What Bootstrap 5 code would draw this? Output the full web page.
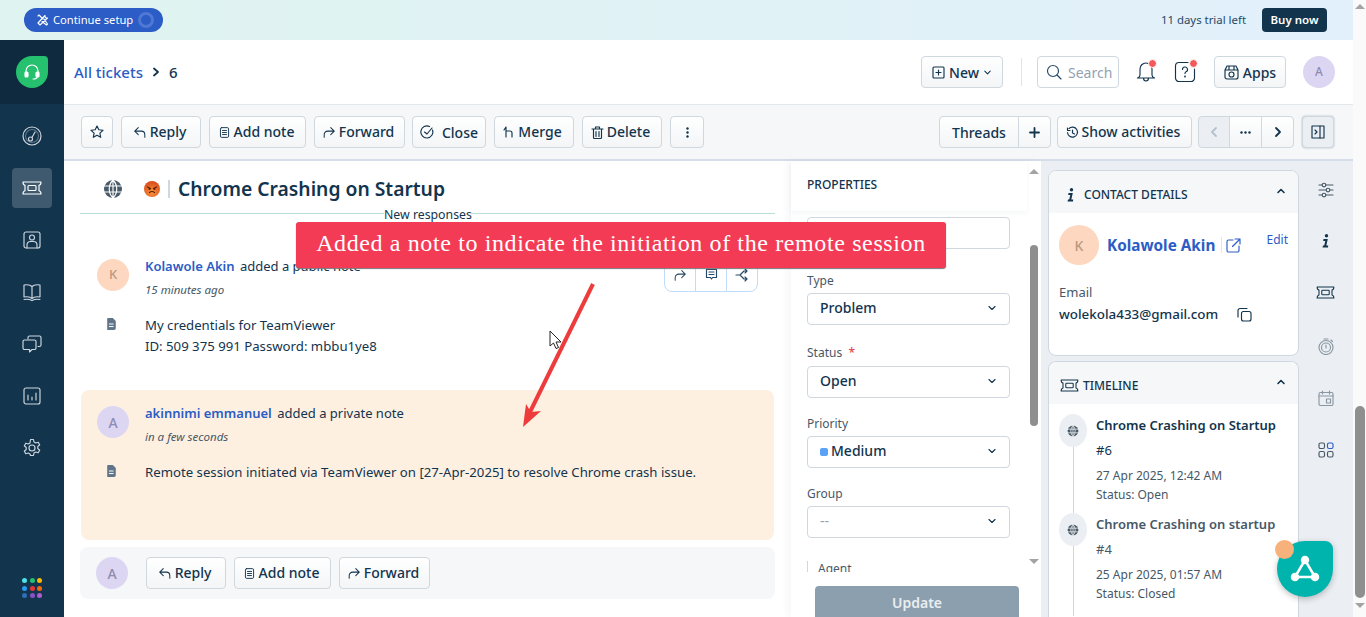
<!DOCTYPE html>
<html lang="en"><head><meta charset="utf-8"><title>Ticket 6</title>
<link href="https://cdn.jsdelivr.net/npm/bootstrap@5.3.0/dist/css/bootstrap.min.css" rel="stylesheet">
<style>
html,body{height:617px;overflow:hidden}
body{font-family:"Noto Sans","Open Sans",sans-serif;font-size:13px;color:#12344d;display:flex;position:relative;background:#fff}
svg.ic{fill:none;stroke:currentColor;stroke-width:1.15;stroke-linecap:round;stroke-linejoin:round;flex:none}
.appcol{width:1353px;height:617px;display:flex;flex-direction:column}
.pagesb{width:13px;height:617px;background:#fafafa;display:flex;flex-direction:column;align-items:center}
.sbup{width:0;height:0;border-left:5px solid transparent;border-right:5px solid transparent;border-bottom:5px solid #a3a3a3}
.sbdn{width:0;height:0;border-left:5px solid transparent;border-right:5px solid transparent;border-top:5px solid #a3a3a3}
.topstrip{height:40px;background:linear-gradient(90deg,#dff4f0,#e2f0fb);padding:0 26px 0 24px;flex:none}
.setup-pill{height:24px;width:139px;border-radius:12px;background:#2c5cc5;color:#fff;font-size:11.2px;padding-left:13px;gap:4px}
.setup-ring{width:16px;height:16px;border-radius:50%;border:3px solid #4f78d4;margin-left:1px}
.trial{font-size:11.4px;color:#264966;margin-right:16px}
.buynow{height:24px;width:65px;background:#12344d;color:#fff;border-radius:4px;font-size:11.5px;font-weight:600}
.mainrow{flex:1;min-height:0}
.siderail{width:64px;background:#12344d;flex:none;color:#cfd7df}
.logoblock{height:64px;background:#0f2a3e}
.logodrop{width:32px;height:32px;background:#25c16f;border-radius:50% 4px 50% 50%;color:#fff}
.railitems{padding-top:12px;gap:12px}
.railitem{width:40px;height:40px;border-radius:4px}
.railitem.on{background:#3f5a6f}
.dotgrid{display:grid;grid-template-columns:repeat(3,5px);gap:2.5px;padding-bottom:19px}
.dotgrid i{width:5px;height:5px;border-radius:50%;display:block}
.contentcol{flex:1;min-width:0}
.headbar{height:65px;border-bottom:1px solid #e3e8ed;padding:0 18px 0 10px;flex:none}
.crumb{font-size:15px;font-weight:500;color:#2c5cc5}
.crumbnum{font-size:15px;font-weight:500}
.tbtn{height:32px;background:linear-gradient(#fff,#f3f5f7);border:1px solid #cfd7df;border-radius:4px;color:#12344d;font-size:14px;font-weight:500;padding:0;display:inline-flex;align-items:center;justify-content:center;gap:4px;flex:none;white-space:nowrap}
.tbtn.txbtn{padding:0 3px 2px 0;gap:3px}
.tbtn.txbtn svg{margin-top:2px}
.vsep{width:1px;height:28px;background:#dfe5ea;margin:0 15px 0 18px}
.searchbox{width:82px;height:32px;border:1px solid #cfd7df;border-radius:4px;color:#92a2b1;font-size:14px;padding-left:8px;gap:6px;background:#fff}
.dotwrap{position:relative;display:flex;color:#12344d;margin-left:17px}
.reddot{position:absolute;top:-2px;right:-1px;width:7px;height:7px;background:#f25a5a;border-radius:50%;border:1px solid #fff;box-sizing:content-box}
.avcirc{border-radius:50%;width:32px;height:32px;flex:none;font-size:13px;font-weight:500}
.av-a{background:#dcd6f2;color:#8e8bb0}
.av-k{background:#fdd7bf;color:#b9997f}
.toolbar{height:56px;background:#f5f7f9;border-bottom:2px solid #d5dee8;padding:0 19px 0 17px;flex:none;gap:8px}
.w32{width:32px}
.btngrp{display:flex}
.btngrp .tbtn{border-radius:0;margin-left:-1px}
.btngrp .tbtn:first-child{border-radius:4px 0 0 4px;margin-left:0}
.btngrp .tbtn:last-child{border-radius:0 4px 4px 0}
.workrow{flex:1;min-height:0}
.ticketcol{width:727px;flex:none;padding:0 16px;position:relative;overflow:hidden}
.subjrow{height:52px;padding:4px 0 0 23px}
.subject{font-size:19.3px;font-weight:600;margin:0;line-height:1}
.emoji{margin-left:21px;flex:none}
.subjsep{width:2px;height:18px;background:#cfd7df;margin:0 8px}
.newresp{position:relative;height:1px;background:#b9e0d8}
.newresp span{position:absolute;left:304px;top:-5px;font-size:12.3px;line-height:14px;background:#fff;width:87px;text-align:center;white-space:nowrap}
.note{display:grid;grid-template-columns:48px 1fr;padding:0 16px;align-content:start}
.note1{height:176px;padding:45px 16px 0 17px;position:relative}
.note2{height:150px;background:#fef0e1;border-radius:8px;padding-top:16px;margin:0 1px}
.notename{font-weight:600;color:#2c5cc5;margin-right:2px}
.notehead{line-height:20px;margin-top:-3px}
.notetime{font-size:11.5px;font-style:italic;color:#475867;line-height:16px;margin-top:6px}
.notedoc{color:#5f7488;margin-left:9px;margin-top:3px;display:block}
.notebody{line-height:21px;margin-top:17px;font-size:13.2px}
.docwrap{margin-top:17px}
.hovertools{position:absolute;left:584px;top:39px;width:94px;height:39px;background:#fff;border:1px solid #bfdcf9;border-radius:0 0 8px 8px}
.hovertools span{flex:1;display:flex;align-items:center;justify-content:center;border-left:1px solid #bfdcf9;padding-top:4px;color:#264966}
.hovertools span:first-child{border-left:0}
.replybar{height:52px;background:#f5f7f9;border-radius:8px;margin-top:7px;padding:0 16px;gap:8px}
.replybar .avcirc{margin-right:10px}
.propcol{width:250px;flex:none;box-shadow:-4px 0 6px rgba(18,52,77,.04);display:flex;flex-direction:column;position:relative}
.prophead{height:50px;padding:15px 0 0 16px;font-size:12px;font-weight:500;box-shadow:0 2px 4px rgba(18,52,77,.05);position:relative;z-index:1;width:236px;flex:none}
.propbody{flex:1;min-height:0;overflow:hidden;padding:6px 30px 0 16px}
.propscroll{position:absolute;right:1px;top:0;width:12px;height:411px;display:flex;flex-direction:column;align-items:center;padding-top:6px}
.propthumb{width:8px;height:181px;background:#8f8f8f;border-radius:4px;margin-top:71px}
.fieldbox{height:32px;width:203px;border:1px solid #cfd7df;border-radius:4px;background:#fff;font-size:14px;font-weight:500;padding:0 12px 2px;justify-content:space-between;line-height:20px}
.fieldlbl{font-size:12px;color:#475867;line-height:16px;margin-top:24px;margin-bottom:4px}
.lbl-status{margin-top:20px;margin-bottom:5px}
.lbl-next{margin-top:18px}
.lbl-agent{border-left:1px solid #cfd7df;padding-left:10px;margin-top:23px}
.star{color:#e43538}
.prio{width:8px;height:8px;background:#5aa2f7;border-radius:2px;margin-right:3px;display:inline-block}
.updatewrap{height:31px;flex:none;padding-left:24px;margin-top:14px}
.updatebtn{width:204px;height:44px;background:#8c9fae;border-radius:4px 4px 0 0;color:#e9eef2;font-weight:600;font-size:14px;text-align:center;line-height:33px}
.detailcol{flex:1;background:#ebeff3;display:flex;padding:9px 0 0 7px;min-width:0;overflow:hidden}
.panelcards{width:251px;flex:none}
.pcard{background:#fff;border:1px solid #cfd7df;border-radius:8px;overflow:hidden}
.pcardhead{height:42px;background:#f5f7f9;padding:5px 12px 0 17px;font-size:12px;font-weight:500;gap:8px}
.pcardhead .chev{margin-top:-7px}
.contactcard{height:186px;margin-bottom:5px;position:relative}
.bigav{width:40px;height:40px;font-size:14px}
.cname{font-size:15.3px;font-weight:700;color:#2c5cc5;padding-top:1px}
.namesep{width:1px;height:16px;background:#dfe5ea;margin:0 -4px 0 -2px}
.editlink{font-size:12px;color:#2c5cc5;position:absolute;right:10px;top:60px}
.emlbl{font-size:13px;color:#475867;line-height:18px;margin:18px 0 3px}
.emval{font-weight:500;font-size:13.4px}
.tlcard{height:300px;border-bottom:0;border-radius:8px 8px 0 0}
.tlcardhead{padding-left:11px;gap:4px}
.tlitem{position:relative;padding-left:47px;height:99px;padding-top:11px}
.tlitem::before{content:"";position:absolute;left:24px;top:14px;bottom:-14px;width:1px;background:#cfd7df}
.tlicon{position:absolute;left:10px;top:10px;width:28px;height:33px;background:#ebeff3;border-radius:50%;color:#475867}
.tltitle{font-weight:600;line-height:20px}
.tlnum{line-height:20px;margin-top:5px}
.tlsub{font-size:12px;color:#475867;line-height:19px;margin-top:6px}
.tlsub+.tlsub{margin-top:0}
.closed .tltitle,.closed .tlnum{color:#475867}
.siderail2{width:53px;flex:none;padding-top:8px;color:#475867}
.siderail2 div{height:52px;width:100%;display:flex;justify-content:center;padding-top:4px}
.annot{position:absolute;left:296px;top:222px;width:650px;height:46px;background:#f33b55;border-radius:3px;box-shadow:0 1px 1px #777;color:#fff;font-family:"Liberation Serif",serif;font-size:24px;letter-spacing:.62px;padding-bottom:5px;z-index:5}
.arrowlay{position:absolute;left:500px;top:270px;z-index:6}
.pointer{position:absolute;left:549px;top:330px;z-index:7}
.fab{position:absolute;left:1277px;top:541px;width:56px;height:56px;background:#00b4ae;border-radius:50% 8px 50% 50%;box-shadow:0 2px 6px rgba(0,0,0,.25);z-index:8}
.fabdot{position:absolute;left:1275px;top:540px;width:19px;height:19px;background:#f7b27c;border-radius:50%;z-index:9}
</style></head>
<body>
<svg width="0" height="0" style="position:absolute">
<symbol id="i-ticket" viewBox="0 0 20 14"><path d="M1 1h18c0 1-.5 3-2 3.300v5.400c1.500.3 2 2.300 2 3.300H1c0-1 .5-3 2-3.300V4.300C1.500 4 1 2 1 1z"/><rect x="6" y="4.500" width="8" height="5" rx="1"/></symbol>
<symbol id="i-reply" viewBox="0 0 16 16"><path d="M6 3L2 7l4 4M2 7h7.500A4 4 0 0 1 13.500 11v3"/></symbol>
<symbol id="i-fwd" viewBox="0 0 16 16"><path d="M10 3l4 4-4 4M14 7H6.500A4 4 0 0 0 2.500 11v3"/></symbol>
<symbol id="i-note" viewBox="0 0 16 16"><rect x="3" y="2" width="10" height="12" rx="1.500"/><path d="M5.500 5.500h5M5.500 8h5M5.500 10.500h5"/></symbol>
<symbol id="i-down" viewBox="0 0 10 10"><path d="M2 3.500L5 6.500l3-3"/></symbol>
<symbol id="i-globe" viewBox="0 0 20 20"><circle cx="10" cy="10" r="9" fill="currentColor" stroke="none"/><path stroke="#fff" d="M1 7h18M1 13h18M10 1v18M10 1c-5 5-5 13 0 18M10 1c5 5 5 13 0 18"/></symbol>
<symbol id="i-doc" viewBox="0 0 12 14"><path fill="currentColor" stroke="none" d="M2 0h5.500L11 3.500V12a2 2 0 0 1-2 2H2a1 1 0 0 1-1-1V1a1 1 0 0 1 1-1z"/><path stroke="#fff" d="M3.500 7h4.500M3.500 10h4.500"/></symbol>
<symbol id="i-info" viewBox="0 0 10 14"><circle cx="5.500" cy="1.800" r="1.700" fill="currentColor" stroke="none"/><path fill="currentColor" stroke="none" d="M2.500 5h4.300L5.300 11.500H7.200L7 13.500H1.500L2 11.500h1.200L4.300 7H2.200z"/></symbol>
</svg>

<div class="appcol">
 <div class="topstrip d-flex align-items-center">
  <div class="setup-pill d-flex align-items-center">
   <svg class="ic" width="12" height="12" viewBox="0 0 12 12"><path d="M2 1l4 4M1 2l1-1M7 5l3.500 5-1 1L5 7.500M8 1.500a2 2 0 0 0 2.500 2.500L3 11 1 9z"/></svg>
   <span>Continue setup</span><span class="setup-ring"></span>
  </div>
  <span class="trial ms-auto">11 days trial left</span>
  <span class="buynow d-flex align-items-center justify-content-center">Buy now</span>
 </div>
 <div class="mainrow d-flex">
  <nav class="siderail d-flex flex-column">
   <div class="logoblock d-flex align-items-center justify-content-center">
    <div class="logodrop d-flex align-items-center justify-content-center">
     <svg class="ic" width="20" height="20" viewBox="0 0 20 20"><path d="M4 12V9a6 6 0 0 1 12 0v3M15 15c0 1.500-1.500 2-4 2"/><rect x="3" y="10" width="3" height="5" rx="1" fill="#fff"/><rect x="14" y="10" width="3" height="5" rx="1" fill="#fff"/></svg>
    </div>
   </div>
   <div class="railitems d-flex flex-column align-items-center flex-grow-1">
    <div class="railitem d-flex align-items-center justify-content-center"><svg class="ic" width="20" height="20" viewBox="0 0 20 20"><circle cx="10" cy="10" r="9"/><circle cx="10" cy="10" r="6.500" stroke-opacity=".4"/><circle cx="8.500" cy="13" r="2"/><path d="M10 11.500L13 6"/></svg></div>
    <div class="railitem on d-flex align-items-center justify-content-center"><svg class="ic" width="20" height="14" style="color:#fff"><use href="#i-ticket"/></svg></div>
    <div class="railitem d-flex align-items-center justify-content-center"><svg class="ic" width="18" height="18" viewBox="0 0 18 18"><rect x="1" y="1" width="16" height="16" rx="2"/><circle cx="9" cy="6.500" r="2.500"/><path d="M4 17v-3a3.500 3.500 0 0 1 3.500-3.500h3A3.500 3.500 0 0 1 14 14v3"/></svg></div>
    <div class="railitem d-flex align-items-center justify-content-center"><svg class="ic" width="18" height="18" viewBox="0 0 18 18"><path d="M9 3.500C7.500 2 4 1.500 1 2v12c3-.5 6.500 0 8 1.500 1.500-1.500 5-2 8-1.500V2c-3-.5-6.500 0-8 1.500zM9 3.500v12M1 16.500c3-.5 6 0 8 1 2-1 5-1.500 8-1"/></svg></div>
    <div class="railitem d-flex align-items-center justify-content-center"><svg class="ic" width="20" height="18" viewBox="0 0 20 18"><path d="M6 4V2.500A1.500 1.500 0 0 1 7.500 1h10A1.500 1.500 0 0 1 19 2.500V10a1.500 1.500 0 0 1-1.500 1.500H16"/><path d="M2.500 5h10A1.500 1.500 0 0 1 14 6.500V13a1.500 1.500 0 0 1-1.500 1.500H10L7.500 17v-2.500h-5A1.500 1.500 0 0 1 1 13V6.500A1.500 1.500 0 0 1 2.500 5z"/></svg></div>
    <div class="railitem d-flex align-items-center justify-content-center"><svg class="ic" width="18" height="18" viewBox="0 0 18 18"><rect x="1" y="1" width="16" height="16" rx="2"/><path d="M5 8v5M9 10v3M13 6v7"/></svg></div>
    <div class="railitem d-flex align-items-center justify-content-center"><svg class="ic" width="20" height="20" viewBox="0 0 20 20"><circle cx="10" cy="10" r="3"/><path d="M8.500 1.500h3l.5 2.500 1.800 1 2.400-.8 1.500 2.600-1.900 1.700v2l1.900 1.700-1.500 2.600-2.400-.8-1.800 1-.5 2.500h-3L8 16l-1.800-1-2.400.8-1.500-2.600L4.200 11.500v-2L2.300 7.800l1.500-2.600 2.400.8L8 5z"/></svg></div>
    <div class="dotgrid mt-auto">
     <i style="background:#4de1e8"></i><i style="background:#25c16f"></i><i style="background:#ffb700"></i>
     <i style="background:#2c9af0"></i><i style="background:#e43538"></i><i style="background:#f2690d"></i>
     <i style="background:#2c6fb8"></i><i style="background:#8d4fc4"></i><i style="background:#b25bd1"></i>
    </div>
   </div>
  </nav>
  <div class="contentcol d-flex flex-column">
   <header class="headbar d-flex align-items-center">
    <span class="crumb">All tickets</span>
    <svg class="ic mx-2" width="10" height="10" viewBox="0 0 10 10"><path stroke-width="1.800" d="M3 1.500L7 5l-4 3.500"/></svg>
    <span class="crumbnum">6</span>
    <button class="tbtn ms-auto" style="width:82px"><svg class="ic" width="13" height="13" viewBox="0 0 13 13"><rect x="1" y="1" width="11" height="11" rx="1"/><path d="M6.500 4v5M4 6.500h5"/></svg> New <svg class="ic" width="9" height="9"><use href="#i-down"/></svg></button>
    <span class="vsep"></span>
    <div class="searchbox d-flex align-items-center"><svg class="ic" width="16" height="16" viewBox="0 0 16 16" style="color:#264966"><circle cx="7" cy="7" r="5.500"/><path d="M11 11l4 4"/></svg>Search</div>
    <span class="dotwrap"><svg class="ic" width="20" height="22" viewBox="0 0 20 22"><path d="M10 2a6 6 0 0 0-6 6v6c0 1.500-1 2.500-2.500 3h17C17 16.500 16 15.500 16 14V8a6 6 0 0 0-6-6zM7.500 17c0 4 5 4 5 0"/></svg><i class="reddot"></i></span>
    <span class="dotwrap"><svg class="ic" width="24" height="24" viewBox="0 0 24 24"><path d="M15 2.500H6A3.500 3.500 0 0 0 2.500 6v12A3.500 3.500 0 0 0 6 21.500h12a3.500 3.500 0 0 0 3.500-3.500V9"/><path d="M9.500 9.500a2.500 2.500 0 1 1 3.500 2.300c-.7.400-1 1-1 1.700"/><circle cx="12" cy="16.500" r=".4"/></svg><i class="reddot" style="right:-1px;top:-1px"></i></span>
    <button class="tbtn" style="width:72px;margin-left:17px"><svg class="ic" width="15" height="15" viewBox="0 0 15 15"><path d="M3 1h9l2 4v7a2 2 0 0 1-2 2H3a2 2 0 0 1-2-2V5zM1 5h13M5 1v4M10 1v4"/><circle cx="7.500" cy="9.500" r="2.500"/></svg>Apps</button>
    <span class="avcirc av-a d-flex align-items-center justify-content-center" style="margin-left:17px;font-size:12px">A</span>
   </header>
   <div class="toolbar d-flex align-items-center">
    <button class="tbtn w32"><svg class="ic" width="14" height="14" viewBox="0 0 14 14"><path d="M7 1l1.800 3.800 4.200.5-3.100 2.900.8 4.100L7 10.300l-3.700 2 .8-4.100L1 5.300l4.200-.5z"/></svg></button>
    <button class="tbtn txbtn" style="width:80px"><svg class="ic" width="14" height="14"><use href="#i-reply"/></svg>Reply</button>
    <button class="tbtn txbtn" style="width:97px"><svg class="ic" width="13" height="13"><use href="#i-note"/></svg>Add note</button>
    <button class="tbtn txbtn" style="width:91px"><svg class="ic" width="14" height="14"><use href="#i-fwd"/></svg>Forward</button>
    <button class="tbtn" style="width:74px;margin-left:-1px"><svg class="ic me-1" width="14" height="14" viewBox="0 0 14 14"><path d="M12.500 5A6 6 0 1 1 9.500 1.600M4.500 7L7 9l5-6"/></svg>Close</button>
    <button class="tbtn txbtn" style="width:80px"><svg class="ic" width="12" height="12" viewBox="0 0 12 12"><path d="M3 11V1M1 4l2-3M3 5h4a2 2 0 0 1 2 2v4"/></svg>Merge</button>
    <button class="tbtn txbtn" style="width:80px"><svg class="ic" width="13" height="13" viewBox="0 0 13 13"><path d="M1 3h11M4.500 3V1h4v2M2.500 3v8.500a1 1 0 0 0 1 1h6a1 1 0 0 0 1-1V3M5 5.500v5M8 5.500v5"/></svg>Delete</button>
    <button class="tbtn" style="width:34px"><svg width="3" height="11" viewBox="0 0 3 11" fill="currentColor"><circle cx="1.500" cy="1.500" r="1.200"/><circle cx="1.500" cy="5.500" r="1.200"/><circle cx="1.500" cy="9.500" r="1.200"/></svg></button>
    <div class="btngrp ms-auto"><button class="tbtn" style="width:80px">Threads</button><button class="tbtn" style="width:33px"><svg class="ic" width="11" height="11" viewBox="0 0 11 11"><path stroke-width="1.800" d="M5.500 1v9M1 5.500h9"/></svg></button></div>
    <button class="tbtn txbtn" style="width:135px;margin-left:-2px"><svg class="ic" width="13" height="13" viewBox="0 0 13 13"><path d="M3 2.500A5 5 0 1 1 1.500 6.500M1.500 2v2.500h2.500M6.500 4v3l2 1"/></svg>Show activities</button>
    <div class="btngrp" style="margin-left:-2px"><button class="tbtn" style="width:32px;background:#ebeff3;color:#b4c0cb"><svg class="ic" width="10" height="12" viewBox="0 0 10 12"><path stroke-width="1.800" d="M7 2L3 6l4 4"/></svg></button><button class="tbtn" style="width:33px"><svg width="11" height="3" fill="currentColor"><circle cx="1.500" cy="1.500" r="1.200"/><circle cx="5.500" cy="1.500" r="1.200"/><circle cx="9.500" cy="1.500" r="1.200"/></svg></button><button class="tbtn" style="width:33px"><svg class="ic" width="10" height="12" viewBox="0 0 10 12"><path stroke-width="1.800" d="M3 2l4 4-4 4"/></svg></button></div>
    <button class="tbtn w32" style="background:#ebeff3;box-shadow:0 0 2px rgba(18,52,77,.35)"><svg class="ic" width="14" height="14" viewBox="0 0 14 14"><rect x="1" y="1" width="12" height="12"/><path d="M9 1v12M4 5l2 2-2 2"/></svg></button>
   </div>
   <div class="workrow d-flex">
    <main class="ticketcol">
     <div class="subjrow d-flex align-items-center">
      <svg class="ic" width="20" height="20" style="color:#475867"><use href="#i-globe"/></svg>
      <svg class="emoji" width="16" height="16" viewBox="0 0 16 16"><defs><radialGradient id="emo" cx=".5" cy=".7" r=".7"><stop offset="0" stop-color="#f7963a"/><stop offset="1" stop-color="#d8481a"/></radialGradient></defs><circle cx="8" cy="8" r="8" fill="url(#emo)"/><path d="M3.500 6l3 1.500M12.500 6l-3 1.500M5.500 11.500c1.500-1.200 3.500-1.200 5 0" stroke="#5a1c05" stroke-width="1.200" fill="none" stroke-linecap="round"/><circle cx="5.500" cy="8" r="1" fill="#5a1c05"/><circle cx="10.500" cy="8" r="1" fill="#5a1c05"/></svg>
      <span class="subjsep"></span>
      <h1 class="subject">Chrome Crashing on Startup</h1>
     </div>
     <div class="newresp"><span>New responses</span></div>
     <article class="note note1">
      <span class="avcirc av-k d-flex align-items-center justify-content-center">K</span>
      <div><div class="notehead"><span class="notename">Kolawole Akin</span> added a public note</div><div class="notetime">15 minutes ago</div></div>
      <div class="docwrap"><svg class="notedoc ic" width="11" height="12"><use href="#i-doc"/></svg></div>
      <div class="notebody">My credentials for TeamViewer<br>ID: 509 375 991 Password: mbbu1ye8</div>
      <div class="hovertools d-flex">
       <span><svg class="ic" width="14" height="14"><use href="#i-fwd"/></svg></span>
       <span><svg class="ic" width="13" height="13" viewBox="0 0 13 13"><path d="M1.500 1.500h10v8H7.500L6.500 11l-1-1.500h-4zM4 4h5M4 6.500h5"/></svg></span>
       <span><svg class="ic" width="14" height="14" viewBox="0 0 14 14"><path d="M1 7h4M5 7l4-4h3M5 7l4 4h3M10 1l2 2-2 2M10 9l2 2-2 2"/></svg></span>
      </div>
     </article>
     <article class="note note2">
      <span class="avcirc av-a d-flex align-items-center justify-content-center" style="font-size:14px">A</span>
      <div><div class="notehead"><span class="notename">akinnimi emmanuel</span> added a private note</div><div class="notetime">in a few seconds</div></div>
      <div class="docwrap"><svg class="notedoc ic" width="11" height="12"><use href="#i-doc"/></svg></div>
      <div class="notebody">Remote session initiated via TeamViewer on [27-Apr-2025] to resolve Chrome crash issue.</div>
     </article>
     <div class="replybar d-flex align-items-center">
      <span class="avcirc av-a d-flex align-items-center justify-content-center" style="font-size:14px">A</span>
      <button class="tbtn txbtn" style="width:80px"><svg class="ic" width="14" height="14"><use href="#i-reply"/></svg>Reply</button>
      <button class="tbtn txbtn" style="width:97px"><svg class="ic" width="13" height="13"><use href="#i-note"/></svg>Add note</button>
      <button class="tbtn txbtn" style="width:91px"><svg class="ic" width="14" height="14"><use href="#i-fwd"/></svg>Forward</button>
     </div>
    </main>
    <aside class="propcol">
     <div class="prophead">PROPERTIES</div>
     <div class="propbody">
      <div class="fieldbox d-flex align-items-center"></div>
      <div class="fieldlbl">Type</div>
      <div class="fieldbox d-flex align-items-center">Problem<svg class="ic" width="10" height="10"><use href="#i-down"/></svg></div>
      <div class="fieldlbl lbl-status">Status &nbsp;<span class="star">*</span></div>
      <div class="fieldbox d-flex align-items-center">Open<svg class="ic" width="10" height="10"><use href="#i-down"/></svg></div>
      <div class="fieldlbl lbl-next">Priority</div>
      <div class="fieldbox d-flex align-items-center"><span><i class="prio"></i>Medium</span><svg class="ic" width="10" height="10"><use href="#i-down"/></svg></div>
      <div class="fieldlbl lbl-next">Group</div>
      <div class="fieldbox d-flex align-items-center" style="color:#92a2b1;font-weight:400">--<svg class="ic" width="10" height="10" style="color:#12344d"><use href="#i-down"/></svg></div>
      <div class="fieldlbl lbl-agent">Agent</div>
     </div>
     <div class="updatewrap"><div class="updatebtn">Update</div></div>
     <div class="propscroll"><span class="sbup" style="margin-top:2px"></span><span class="propthumb"></span><span class="sbdn" style="margin-top:133px"></span></div>
    </aside>
    <section class="detailcol">
     <div class="panelcards">
      <div class="pcard contactcard">
       <div class="pcardhead d-flex align-items-center"><svg width="10" height="14" style="color:#12344d" fill="currentColor"><use href="#i-info"/></svg><span>CONTACT DETAILS</span><svg class="ic ms-auto chev" width="10" height="10" viewBox="0 0 10 10"><path stroke-width="1.600" d="M2 6.500L5 3.500l3 3"/></svg></div>
       <div style="padding:12px 10px">
        <div class="d-flex align-items-center gap-2"><span class="avcirc av-k bigav d-flex align-items-center justify-content-center">K</span><span class="cname">Kolawole Akin</span><span class="namesep"></span><svg class="ic" width="15" height="15" viewBox="0 0 15 15" style="color:#2c5cc5"><path d="M7 2H2.500A1.500 1.500 0 0 0 1 3.500v9A1.500 1.500 0 0 0 2.500 14h9a1.500 1.500 0 0 0 1.500-1.500V8M9 1h5v5M14 1L6.500 8.500"/></svg></div>
        <div class="emlbl">Email</div>
        <div class="d-flex align-items-center"><span class="emval">wolekola433@gmail.com</span><svg class="ic" width="15" height="15" viewBox="0 0 15 15" style="margin-left:19px"><rect x="4.500" y="4.500" width="9.500" height="9.500" rx="2"/><path d="M10 1.500H3A2 2 0 0 0 1 3.500V10"/></svg></div>
       </div>
       <span class="editlink">Edit</span>
      </div>
      <div class="pcard tlcard">
       <div class="pcardhead tlcardhead d-flex align-items-center"><svg class="ic" width="19" height="13"><use href="#i-ticket"/></svg><span>TIMELINE</span><svg class="ic ms-auto chev" width="10" height="10" viewBox="0 0 10 10"><path stroke-width="1.600" d="M2 6.500L5 3.500l3 3"/></svg></div>
       <div class="tlitem"><span class="tlicon d-flex align-items-center justify-content-center"><svg class="ic" width="12" height="12"><use href="#i-globe"/></svg></span><div class="tltitle">Chrome Crashing on Startup</div><div class="tlnum">#6</div><div class="tlsub">27 Apr 2025, 12:42 AM</div><div class="tlsub">Status: Open</div></div>
       <div class="tlitem closed"><span class="tlicon d-flex align-items-center justify-content-center"><svg class="ic" width="12" height="12"><use href="#i-globe"/></svg></span><div class="tltitle">Chrome Crashing on startup</div><div class="tlnum">#4</div><div class="tlsub">25 Apr 2025, 01:57 AM</div><div class="tlsub">Status: Closed</div></div>
      </div>
     </div>
     <div class="siderail2 d-flex flex-column align-items-center">
      <div><svg class="ic" width="16" height="16" viewBox="0 0 16 16"><path d="M1 3h14M1 8h14M1 13h14"/><circle cx="6" cy="3" r="1.800" fill="#ebeff3"/><circle cx="10" cy="8" r="1.800" fill="#ebeff3"/><circle cx="6" cy="13" r="1.800" fill="#ebeff3"/></svg></div>
      <div style="color:#12344d"><svg width="10" height="14" fill="currentColor"><use href="#i-info"/></svg></div>
      <div style="color:#12344d"><svg class="ic" width="19" height="13"><use href="#i-ticket"/></svg></div>
      <div style="color:#8a97a3"><svg class="ic" width="16" height="17" viewBox="0 0 16 17"><circle cx="8" cy="9.500" r="7"/><circle cx="8" cy="9.500" r="4.500"/><path d="M8 7v3M6 1h4M13 2l1.500 1.500"/></svg></div>
      <div style="color:#8a97a3"><svg class="ic" width="16" height="16" viewBox="0 0 16 16"><rect x="1" y="2.500" width="14" height="13" rx="1.500"/><path d="M1 6h14M4.500 1v3M11.500 1v3"/><rect x="8.500" y="9" width="4" height="4"/></svg></div>
      <div><svg class="ic" width="16" height="16" viewBox="0 0 16 16"><rect x="1" y="1" width="5.500" height="5.500" rx="1.500"/><rect x="9.500" y="1" width="5.500" height="5.500" rx="1.500" stroke="#2c5cc5"/><rect x="1" y="9.500" width="5.500" height="5.500" rx="1.500"/><rect x="9.500" y="9.500" width="5.500" height="5.500" rx="1.500"/></svg></div>
     </div>
    </section>
   </div>
  </div>
 </div>
</div>
<div class="pagesb"><span class="sbup" style="margin-top:4px"></span><span style="width:10px;height:192px;background:#8f8f8f;border-radius:5px;margin-top:397px"></span><span class="sbdn" style="margin-top:5px"></span></div>

<div class="annot d-flex align-items-center justify-content-center">Added a note to indicate the initiation of the remote session</div>
<svg class="arrowlay" width="110" height="165" viewBox="500 270 110 165"><path d="M593 284L530 412" stroke="#ee3b3b" stroke-width="4" fill="none"/><path d="M523 427l3-23 5 8 10-1z" fill="#ee3b3b"/></svg>
<svg class="pointer" width="14" height="20" viewBox="0 0 14 20"><path d="M1 1v15l3.500-3 2.500 5.500 2.500-1-2.500-5.500H12z" fill="#fff" stroke="#222" stroke-width="1"/></svg>
<div class="fab d-flex align-items-center justify-content-center"><svg width="30" height="28" viewBox="0 0 30 28" fill="none" stroke="#fff" stroke-width="2.500"><path d="M15 5L5 22h20z"/><circle cx="15" cy="5" r="3" fill="#fff"/><circle cx="5" cy="22" r="3" fill="#fff"/><circle cx="25" cy="22" r="3" fill="#fff"/></svg></div>
<div class="fabdot"></div>
</body></html>
